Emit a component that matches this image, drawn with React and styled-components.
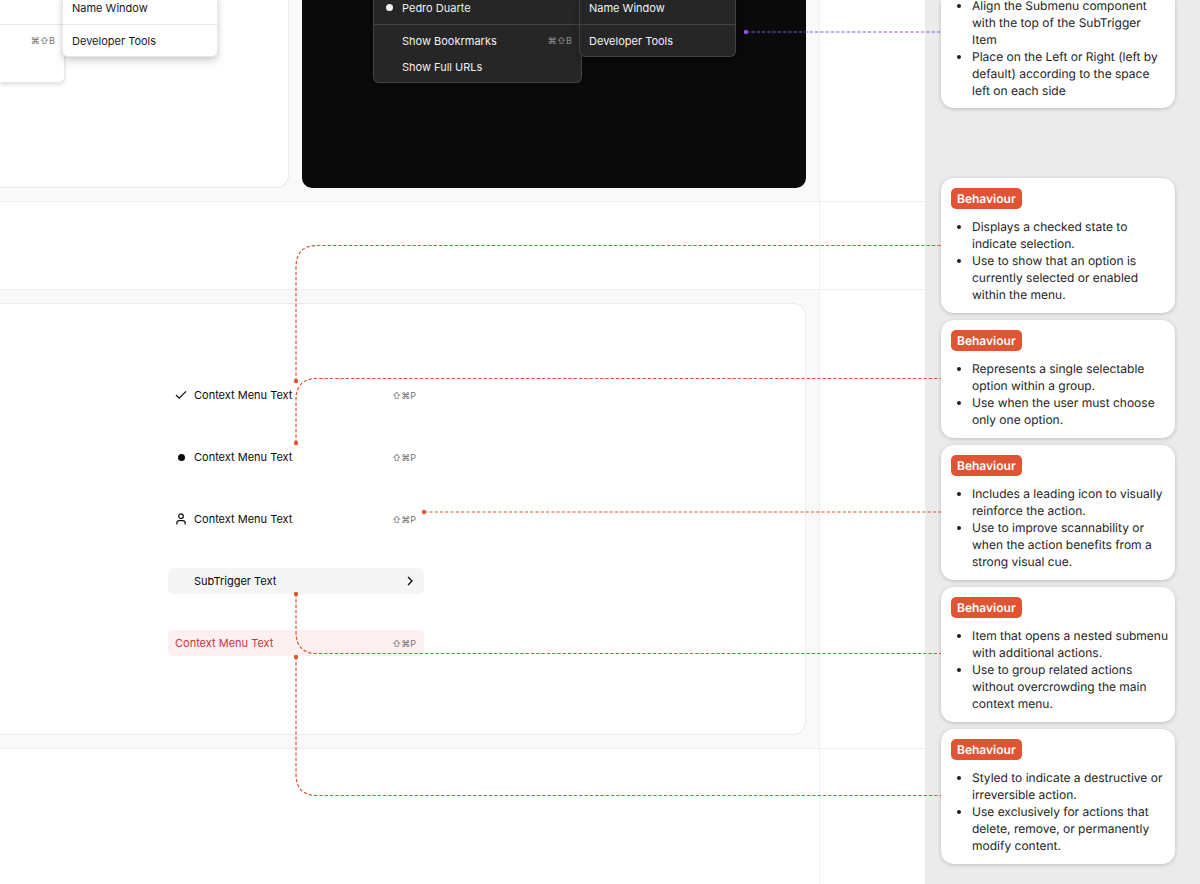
import * as React from 'react';
import styled, { createGlobalStyle, css } from 'styled-components';

const GlobalStyle = createGlobalStyle`
  * {
    box-sizing: border-box;
  }

  body {
    margin: 0;
    background: #fff;
    font-family: Inter, 'Liberation Sans', sans-serif;
    font-size: 12px;
    color: #0a0a0a;
    text-rendering: geometricPrecision;
  }
`;

const Page = styled.div`
  position: relative;
  display: grid;
  grid-template-columns: minmax(0, 1fr) 275px;
  min-height: 100vh;
  overflow: hidden;
`;

const Canvas = styled.main`
  display: grid;
  grid-template-rows: auto 88px auto 1fr;
  min-width: 0;
`;

const Band = styled.section`
  display: grid;
  grid-template-columns: minmax(0, 1fr) 105px;
  border-bottom: 1px solid #efefef;

  &:last-child {
    border-bottom: 0;
  }
`;

const Stage = styled.div`
  border-right: 1px solid #efefef;
  background: ${({ $filled }) => ($filled ? '#f9f9f9' : '#fff')};
`;

const PreviewRow = styled.div`
  display: grid;
  grid-template-columns: 289fr 504fr;
  gap: 13px;
  height: 188px;
  margin: 0 13px 13px 0;
`;

const Preview = styled.div`
  display: flex;
  justify-content: flex-end;
  align-items: flex-start;
  padding-right: 70px;
  overflow: hidden;
  background: #fff;
  border: solid #ebebeb;
  border-width: 0 1px 1px 0;
  border-radius: 0 0 13px 0;

  ${({ $dark }) =>
    $dark &&
    css`
      background: #0a0a0a;
      border: 0;
      border-radius: 0 0 10px 10px;
    `}
`;

const Menu = styled.div`
  width: ${({ $width }) => $width}px;
  margin-top: -5px;
  padding-bottom: 2px;
  border: 1px solid ${({ $dark }) => ($dark ? '#434343' : '#e8e8e8')};
  border-width: 0 1px 1px;
  border-radius: 0 0 6px 6px;
  background: ${({ $dark }) => ($dark ? '#262626' : '#fff')};
  color: ${({ $dark }) => ($dark ? '#f2f2f2' : '#171717')};
  box-shadow: 0 2px 4px rgba(0, 0, 0, 0.12);
`;

const CroppedMenu = styled(Menu)`
  border-left: 0;
  border-bottom-left-radius: 0;
`;

const SubMenu = styled(Menu)`
  margin-left: -3px;
  box-shadow: 0 5px 10px rgba(0, 0, 0, 0.12), 0 2px 4px rgba(0, 0, 0, 0.1);
`;

const Divider = styled.hr`
  height: 1px;
  margin: 3px 0;
  border: 0;
  background: ${({ $dark }) => ($dark ? '#434343' : '#e8e8e8')};
`;

const Item = styled.button`
  display: flex;
  align-items: center;
  width: 100%;
  height: 26px;
  padding: 0 9px 1px;
  border: 0;
  background: none;
  color: inherit;
  font: inherit;
  font-size: 11px;
  text-align: left;
  white-space: nowrap;
`;

const Leading = styled.span`
  display: flex;
  justify-content: center;
  width: 12px;
  margin-right: 7px;
`;

const Dot = styled.span`
  width: 7px;
  height: 7px;
  border-radius: 50%;
  background: currentColor;
`;

const Shortcut = styled.kbd`
  margin-left: auto;
  color: ${({ $dark }) => ($dark ? '#8f8f8f' : '#737373')};
  font-family: Inter, 'DejaVu Sans', sans-serif;
  font-size: 9px;
`;

const StatesPanel = styled.div`
  display: flex;
  flex-direction: column;
  gap: 36px;
  height: 432px;
  margin: 13px 13px 13px 0;
  padding: 78px 0 0 168px;
  border: solid #ebebeb;
  border-width: 1px 1px 1px 0;
  border-radius: 0 13px 13px 0;
  background: #fff;
`;

const StateItem = styled(Item)`
  width: 256px;
  padding: 0 8px 0 7px;
  border-radius: 5px;
  background: ${({ $tone }) => ({ active: '#f5f5f5', danger: '#fdf0f0' })[$tone] || 'none'};
  color: ${({ $tone }) => ($tone === 'danger' ? '#c93636' : '#0a0a0a')};

  > svg {
    margin-left: auto;
  }
`;

const Notes = styled.aside`
  display: flex;
  flex-direction: column;
  gap: 7px;
  padding: 0 25px 20px 16px;
  background: #ebebeb;
`;

const Card = styled.article`
  padding: 10px 6px 10px 10px;
  border-radius: 13px;
  background: #fff;
  box-shadow: 0 1px 4px rgba(0, 0, 0, 0.2);

  &:first-child {
    margin: 0 0 63px;
    padding: 0 10px 9px;
    border-radius: 0 0 13px 13px;
  }

  &:first-child ul {
    margin-top: -3px;
  }
`;

const Tag = styled.h2`
  width: fit-content;
  margin: 0 0 9px;
  padding: 0 6px;
  border-radius: 5px;
  background: #e05434;
  color: #fff;
  font-size: 12px;
  font-weight: 600;
  line-height: 21px;
`;

const List = styled.ul`
  margin: 0;
  padding-left: 21px;
  line-height: 17px;
  color: #1e1e1e;
`;

const Connectors = styled.svg`
  position: absolute;
  top: 0;
  left: 0;
  pointer-events: none;
`;

const notes = [
  [
    'Displays a checked state to indicate selection.',
    'Use to show that an option is currently selected or enabled within the menu.',
  ],
  [
    'Represents a single selectable option within a group.',
    'Use when the user must choose only one option.',
  ],
  [
    'Includes a leading icon to visually reinforce the action.',
    'Use to improve scannability or when the action benefits from a strong visual cue.',
  ],
  [
    'Item that opens a nested submenu with additional actions.',
    'Use to group related actions without overcrowding the main context menu.',
  ],
  [
    'Styled to indicate a destructive or irreversible action.',
    'Use exclusively for actions that delete, remove, or permanently modify content.',
  ],
];

const connectors = [
  { x: 746, y: 32, d: 'M746 32H941', color: '#9250e6' },
  { x: 296, y: 381, d: 'M296 381V267Q296 245.5 317 245.5H941' },
  { x: 296, y: 443, d: 'M296 443V400Q296 378.5 317 378.5H941' },
  { x: 424, y: 512, d: 'M424 512H941' },
  { x: 296, y: 594, d: 'M296 594V632Q296 653.5 317 653.5H941' },
  { x: 296, y: 657, d: 'M296 657V774Q296 795.5 317 795.5H941' },
];

function CheckIcon() {
  return (
    <svg width="12" height="12" viewBox="0 0 12 12" fill="none" stroke="currentColor" strokeWidth="1.2">
      <path d="M1 6 4.2 9.1 11 2.3" />
    </svg>
  );
}

function UserIcon() {
  return (
    <svg width="12" height="12" viewBox="0 0 12 12" fill="none" stroke="currentColor" strokeWidth="1.2">
      <circle cx="6" cy="3.2" r="2.3" />
      <path d="M1.8 11.6V10.2Q1.8 7.7 4.3 7.7H7.7Q10.2 7.7 10.2 10.2V11.6" />
    </svg>
  );
}

function ChevronIcon() {
  return (
    <svg width="12" height="12" viewBox="0 0 12 12" fill="none" stroke="currentColor" strokeWidth="1.3">
      <path d="M4 2 8 6 4 10" />
    </svg>
  );
}

export default function ContextMenuSpec() {
  return (
    <>
      <GlobalStyle />
      <Page>
        <Canvas>
          <Band>
            <Stage $filled>
              <PreviewRow>
                <Preview>
                  <CroppedMenu $width={65}>
                    <Item />
                    <Divider />
                    <Item>
                      <Shortcut>⌘⇧B</Shortcut>
                    </Item>
                    <Item />
                  </CroppedMenu>
                  <SubMenu $width={156}>
                    <Item>Name Window</Item>
                    <Divider />
                    <Item>Developer Tools</Item>
                  </SubMenu>
                </Preview>
                <Preview $dark>
                  <Menu $dark $width={209}>
                    <Item>
                      <Leading><Dot /></Leading>
                      Pedro Duarte
                    </Item>
                    <Divider $dark />
                    <Item>
                      <Leading />
                      Show Bookrmarks
                      <Shortcut $dark>⌘⇧B</Shortcut>
                    </Item>
                    <Item>
                      <Leading />
                      Show Full URLs
                    </Item>
                  </Menu>
                  <SubMenu $dark $width={157}>
                    <Item>Name Window</Item>
                    <Divider $dark />
                    <Item>Developer Tools</Item>
                  </SubMenu>
                </Preview>
              </PreviewRow>
            </Stage>
          </Band>
          <Band>
            <Stage />
          </Band>
          <Band>
            <Stage $filled>
              <StatesPanel>
                <StateItem>
                  <Leading><CheckIcon /></Leading>
                  Context Menu Text
                  <Shortcut>⇧⌘P</Shortcut>
                </StateItem>
                <StateItem>
                  <Leading><Dot /></Leading>
                  Context Menu Text
                  <Shortcut>⇧⌘P</Shortcut>
                </StateItem>
                <StateItem>
                  <Leading><UserIcon /></Leading>
                  Context Menu Text
                  <Shortcut>⇧⌘P</Shortcut>
                </StateItem>
                <StateItem $tone="active">
                  <Leading />
                  SubTrigger Text
                  <ChevronIcon />
                </StateItem>
                <StateItem $tone="danger">
                  Context Menu Text
                  <Shortcut>⇧⌘P</Shortcut>
                </StateItem>
              </StatesPanel>
            </Stage>
          </Band>
          <Band>
            <Stage />
          </Band>
        </Canvas>

        <Notes>
          <Card>
            <List>
              <li>Align the Submenu component with the top of the SubTrigger Item</li>
              <li>Place on the Left or Right (left by default) according to the space left on each side</li>
            </List>
          </Card>
          {notes.map((lines) => (
            <Card key={lines[0]}>
              <Tag>Behaviour</Tag>
              <List>
                {lines.map((line) => (
                  <li key={line}>{line}</li>
                ))}
              </List>
            </Card>
          ))}
        </Notes>

        <Connectors width="1200" height="884" fill="none">
          {connectors.map(({ x, y, d, color = '#e05434' }) => (
            <g key={d}>
              <path d={d} stroke={color} strokeWidth="1.2" strokeDasharray="3.3 2" />
              <circle cx={x} cy={y} r="2.2" fill={color} />
            </g>
          ))}
        </Connectors>
      </Page>
    </>
  );
}
